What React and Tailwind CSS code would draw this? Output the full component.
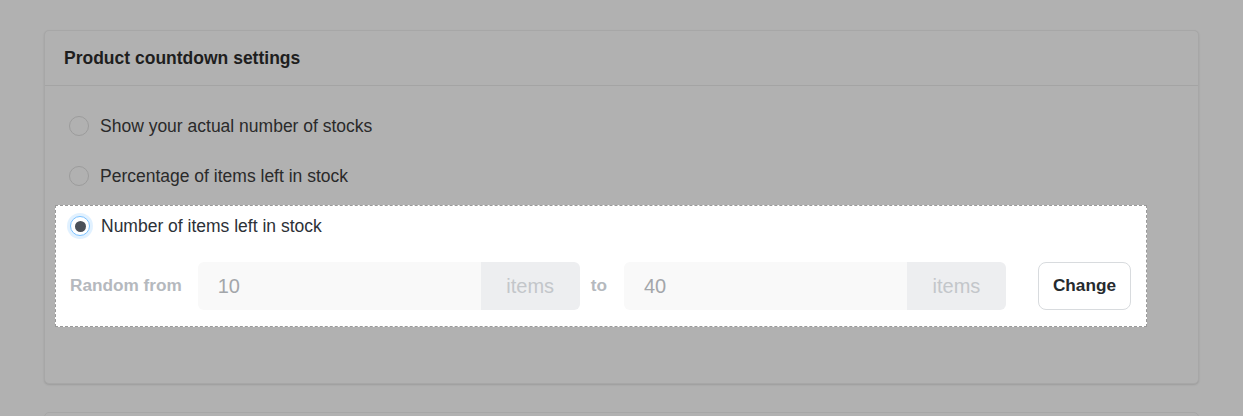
import React from "react";

function Radio({ checked }) {
  if (checked) {
    return (
      <span className="flex h-[20px] w-[20px] shrink-0 items-center justify-center rounded-full border border-[#7cc2ff] bg-white shadow-[0_0_0_3px_rgba(120,190,255,0.22)]">
        <span className="h-[11px] w-[11px] rounded-full bg-[#4b5058]" />
      </span>
    );
  }
  return <span className="h-[20px] w-[20px] shrink-0 rounded-full border border-[#9c9c9c] bg-[#b1b1b1]" />;
}

function NumberInput({ value }) {
  return (
    <div className="flex h-[48px] w-[382px] overflow-hidden rounded-[6px]">
      <div className="flex flex-1 items-center bg-[#f9f9f9] pl-[20px] text-[20px] text-[#a3a6aa]">{value}</div>
      <div className="flex w-[99px] items-center justify-center bg-[#edeef0] text-[20px] text-[#c3c6ca]">items</div>
    </div>
  );
}

export default function App() {
  return (
    <div className="h-[416px] overflow-hidden bg-[#b1b1b1] pt-[30px] font-['Liberation_Sans',Arial,sans-serif]">
      <div className="ml-[44px] w-[1155px] h-[354px] rounded-[5px] border border-[#a7a7a7] bg-[#b1b1b1] shadow-[0_1px_2px_rgba(0,0,0,0.12)]">
        <div className="flex h-[55px] items-center border-b border-[#a4a4a4] pl-[19px] text-[17.5px] font-bold text-[#1e1e1e]">
          Product countdown settings
        </div>
        <div className="pl-[10px] pr-[51px] pt-[29px]">
          <div className="flex h-[22px] items-center gap-[11px] pl-[14px] text-[17.5px] text-[#2a2a2a]">
            <Radio />
            <span>Show your actual number of stocks</span>
          </div>
          <div className="mt-[28px] flex h-[22px] items-center gap-[11px] pl-[14px] text-[17.5px] text-[#2a2a2a]">
            <Radio />
            <span>Percentage of items left in stock</span>
          </div>
          <div className="mt-[18px] border border-dashed border-[#9a9a9a] bg-white pb-[16px] pl-[13px] pt-[9px]">
            <div className="flex h-[22px] items-center gap-[11px] pl-[1px] text-[17.5px] text-[#2c3137]">
              <Radio checked />
              <span>Number of items left in stock</span>
            </div>
            <div className="mt-[25px] flex items-center">
              <span className="ml-[1px] text-[17.2px] font-bold text-[#b5b9be]">Random from</span>
              <div className="ml-[16px]">
                <NumberInput value="10" />
              </div>
              <span className="ml-[11px] text-[17.2px] font-bold text-[#b5b9be]">to</span>
              <div className="ml-[17px]">
                <NumberInput value="40" />
              </div>
              <button className="ml-[32px] flex h-[48px] w-[93px] items-center justify-center rounded-[8px] border border-[#d8dbde] bg-white text-[17.2px] font-bold text-[#262a2e]">
                Change
              </button>
            </div>
          </div>
        </div>
      </div>
      <div className="ml-[44px] mt-[28px] h-[100px] w-[1155px] rounded-[5px] border border-[#a7a7a7] bg-[#b1b1b1]" />
    </div>
  );
}
